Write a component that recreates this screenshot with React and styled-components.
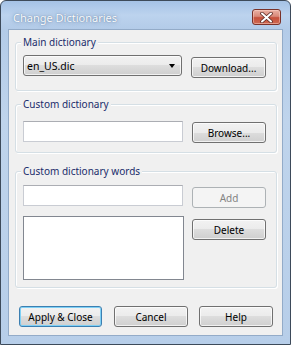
import React from "react";
import styled, { createGlobalStyle } from "styled-components";

const Global = createGlobalStyle`
  html, body { margin: 0; padding: 0; background: #ffffff; }
  body { font-family: "Noto Sans", "Open Sans", sans-serif; }
  * { box-sizing: border-box; }
`;

const FONT = `"Noto Sans", "Open Sans", sans-serif`;

const Window = styled.div`
  width: 291px;
  height: 345px;
  border: 1px solid #3d4a5a;
  border-radius: 6px 6px 0 0;
  background: linear-gradient(180deg, #a5c2e6 0px, #bcd3ee 14px, #b3cbe8 28px, #bfd4ec 120px, #b7cee9 345px);
  display: flex;
  flex-direction: column;
  overflow: hidden;
`;

const TitleBar = styled.div`
  height: 28px;
  flex: none;
  display: flex;
  align-items: flex-start;
  justify-content: space-between;
  padding: 0 9px 0 12px;
`;

const Title = styled.div`
  font-family: ${FONT};
  font-size: 11px;
  line-height: 16px;
  margin-top: 9px;
  color: #f9fbfd;
  text-shadow: 0 0 4px rgba(70, 100, 140, 0.6), 0 0 1px rgba(70, 100, 140, 0.7);
`;

const CloseButton = styled.div`
  width: 29px;
  height: 16px;
  margin-top: 8px;
  border: 1px solid #7a3229;
  border-radius: 3px;
  background: linear-gradient(180deg, #eab1a4 0%, #d98a7a 45%, #c5503c 55%, #cf6a52 100%);
  box-shadow: inset 0 0 0 1px rgba(255, 220, 210, 0.45);
  display: flex;
  align-items: center;
  justify-content: center;
`;

const Client = styled.div`
  flex: 1;
  margin: 0 7px 8px 7px;
  background: #f0f0f0;
  border: 1px solid #93abc8;
  display: flex;
  flex-direction: column;
  padding: 12px 5px 0 6px;
`;

const Group = styled.div`
  position: relative;
  border: 1px solid #d5dfe5;
  border-radius: 3px;
  box-shadow: inset 1px 1px 0 #ffffff, 1px 1px 0 #ffffff;
  padding: ${(p) => p.$pad};
  margin-bottom: ${(p) => p.$mb || 0}px;
  display: flex;
  flex-direction: column;
  gap: ${(p) => p.$gap || 0}px;
`;

const GroupLabel = styled.div`
  position: absolute;
  top: -8px;
  left: 5px;
  padding: 0 2px;
  background: #f0f0f0;
  font-family: ${FONT};
  font-size: 10px;
  line-height: 14px;
  color: #1a2c6b;
  white-space: nowrap;
`;

const Row = styled.div`
  display: flex;
  align-items: flex-start;
  justify-content: space-between;
`;

const Combo = styled.div`
  width: 159px;
  height: 21px;
  border: 1px solid #707070;
  border-radius: 3px;
  background: linear-gradient(180deg, #f2f2f2 0%, #ebebeb 50%, #dddddd 50%, #cfcfcf 100%);
  box-shadow: inset 0 0 0 1px rgba(255, 255, 255, 0.7);
  display: flex;
  align-items: center;
  justify-content: space-between;
  padding: 0 6px 0 3px;
  font-family: ${FONT};
  font-size: 10.5px;
  color: #000;
`;

const Arrow = styled.div`
  width: 0;
  height: 0;
  border-left: 3.5px solid transparent;
  border-right: 3.5px solid transparent;
  border-top: 4px solid #000;
`;

const TextBox = styled.div`
  width: ${(p) => p.$w || 160}px;
  height: ${(p) => p.$h || 21}px;
  background: #ffffff;
  border: 1px solid ${(p) => (p.$list ? "#828790" : "#c9ccd3")};
  border-top-color: ${(p) => (p.$list ? "#828790" : "#abadb3")};
`;

const Button = styled.div`
  width: ${(p) => p.$w}px;
  height: 21px;
  margin-top: ${(p) => p.$mt || 0}px;
  border: 1px solid ${(p) => (p.$disabled ? "#adb2b5" : p.$default ? "#3c7fb1" : "#707070")};
  border-radius: 3px;
  background: ${(p) =>
    p.$disabled
      ? "#f4f4f4"
      : "linear-gradient(180deg, #f2f2f2 0%, #ebebeb 50%, #dddddd 50%, #cfcfcf 100%)"};
  box-shadow: ${(p) =>
    p.$default
      ? "inset 0 0 0 1px #7ed0f5"
      : p.$disabled
      ? "none"
      : "inset 0 0 0 1px rgba(255,255,255,0.7)"};
  display: flex;
  align-items: center;
  justify-content: center;
  font-family: ${FONT};
  font-size: 10px;
  color: ${(p) => (p.$disabled ? "#838383" : "#000")};
  white-space: nowrap;
`;

const Footer = styled.div`
  display: flex;
  gap: 12px;
  padding: 18px 0 0 4px;
  & > :nth-child(3) { margin-left: -1px; }
`;

function CloseGlyph() {
  return (
    <svg width="13" height="11" viewBox="0 0 13 11">
      <path
        d="M2 1.5 L11 9.5 M11 1.5 L2 9.5"
        stroke="#5a2a24"
        strokeWidth="3.6"
        strokeLinecap="round"
        fill="none"
      />
      <path
        d="M2 1.5 L11 9.5 M11 1.5 L2 9.5"
        stroke="#ffffff"
        strokeWidth="2"
        strokeLinecap="round"
        fill="none"
      />
    </svg>
  );
}

export default function App() {
  return (
    <>
      <Global />
      <Window>
        <TitleBar>
          <Title>Change Dictionaries</Title>
          <CloseButton>
            <CloseGlyph />
          </CloseButton>
        </TitleBar>
        <Client>
          <Group $pad="12px 10px 12px 7px" $mb={13}>
            <GroupLabel>Main dictionary</GroupLabel>
            <Row>
              <Combo>
                <span>en_US.dic</span>
                <Arrow />
              </Combo>
              <Button $w={75} $mt={2}>Download...</Button>
            </Row>
          </Group>
          <Group $pad="16px 10px 9px 7px" $mb={18}>
            <GroupLabel>Custom dictionary</GroupLabel>
            <Row>
              <TextBox $w={160} />
              <Button $w={74} $mt={1}>Browse...</Button>
            </Row>
          </Group>
          <Group $pad="13px 10px 7px 7px" $gap={8}>
            <GroupLabel>Custom dictionary words</GroupLabel>
            <Row>
              <TextBox $w={160} />
              <Button $w={74} $mt={2} $disabled>Add</Button>
            </Row>
            <Row>
              <TextBox $w={161} $h={64} $list />
              <Button $w={74} $mt={3}>Delete</Button>
            </Row>
          </Group>
          <Footer>
            <Button $w={83} $default>Apply &amp; Close</Button>
            <Button $w={74}>Cancel</Button>
            <Button $w={74}>Help</Button>
          </Footer>
        </Client>
      </Window>
    </>
  );
}
